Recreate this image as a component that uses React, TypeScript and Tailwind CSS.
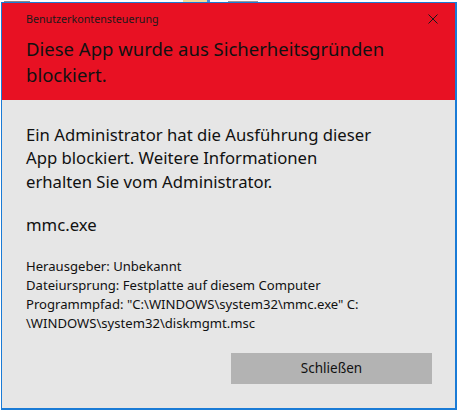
import React from "react";

const font = { fontFamily: '"Noto Sans", "Segoe UI", sans-serif' };

function CloseIcon() {
  return (
    <svg width="10" height="10" viewBox="0 0 10 10" className="shrink-0">
      <path d="M0.5 0.5 L9.5 9.5 M9.5 0.5 L0.5 9.5" stroke="#1a1a1a" strokeWidth="1" fill="none" />
    </svg>
  );
}

function DesktopStrip() {
  // the bit of Explorer that peeks out above the dialog
  return (
    <div className="flex h-[2px] items-end">
      <div className="ml-[4px] h-[1px] w-[26px] bg-[#8a8a8a]" />
      <div className="ml-[153px] h-[2px] w-[24px] bg-[#f3dc9c]" />
      <div className="h-[2px] w-[3px] bg-[#4a90d9]" />
      <div className="ml-[18px] h-[1px] w-[30px] bg-[#9a9a9a]" />
    </div>
  );
}

export default function App() {
  const details = [
    "Herausgeber: Unbekannt",
    "Dateiursprung: Festplatte auf diesem Computer",
  ];

  return (
    <div className="h-[410px] w-[460px] overflow-hidden bg-white text-[#000]" style={font}>
      <DesktopStrip />
      <div className="ml-[1px] flex h-[408px] w-[456px] flex-col border-t border-l border-r-2 border-b-2 border-[#1a7bd6] bg-[#e6e6e6]">
        <div className="bg-[#e81123] pb-[12px] pl-[24px] pt-[8px]">
          <div className="flex items-center justify-between pr-[17px]">
            <span className="text-[10.7px] leading-[16px] text-[#1a1a1a]">Benutzerkontensteuerung</span>
            <CloseIcon />
          </div>
          <h1 className="mt-[9px] w-[390px] text-[18.5px] leading-[26px] text-[#111]">
            Diese App wurde aus Sicherheitsgründen blockiert.
          </h1>
        </div>

        <div className="flex flex-1 flex-col pl-[24px] pr-[23px]">
          <p className="mt-[22.5px] whitespace-nowrap text-[16.7px] leading-[23.5px] text-[#111]">
            Ein Administrator hat die Ausführung dieser
            <br />
            App blockiert. Weitere Informationen
            <br />
            erhalten Sie vom Administrator.
          </p>
          <p className="mt-[19.5px] text-[16.7px] leading-[23.5px] text-[#111]">mmc.exe</p>

          <div className="mt-[21px] text-[13.1px] leading-[19px] text-[#111]">
            {details.map((line) => (
              <div key={line}>{line}</div>
            ))}
            <div>Programmpfad: "C:\WINDOWS\system32\mmc.exe" C:</div>
            <div>\WINDOWS\system32\diskmgmt.msc</div>
          </div>

          <div className="mt-[19.5px] flex justify-end">
            <button className="h-[31px] w-[201px] bg-[#b3b3b3] text-[13.5px] text-[#111]">Schließen</button>
          </div>
        </div>
      </div>
    </div>
  );
}
